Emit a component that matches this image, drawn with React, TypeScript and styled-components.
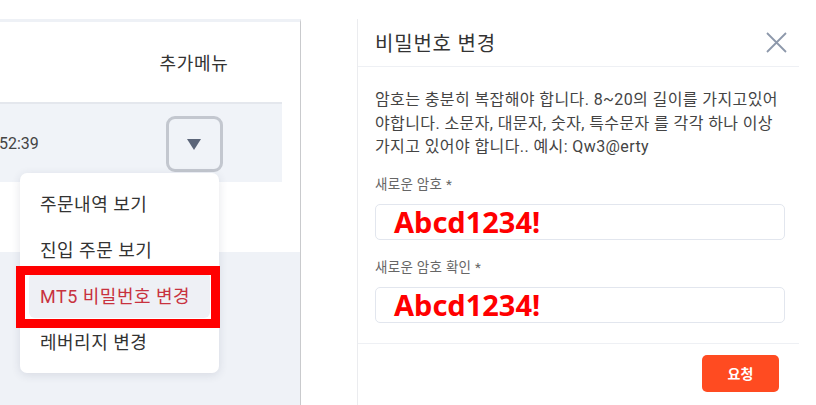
import React from 'react';
import styled, {createGlobalStyle} from 'styled-components';

const GlobalStyle = createGlobalStyle`
  html, body {
    margin: 0;
    padding: 0;
    background: #FFFFFF;
  }
  body {
    font-family: Roboto, "Noto Sans CJK KR", sans-serif;
  }
`;

const Page = styled.div`
  display: flex;
  align-items: stretch;
  width: 816px;
  height: 405px;
  padding-top: 19px;
  box-sizing: border-box;
  overflow: hidden;
`;

const LeftPanel = styled.div`
  position: relative;
  display: flex;
  flex-direction: column;
  width: 300px;
  flex-shrink: 0;
  border-top: 3px solid #eef1f6;
  border-right: 1px solid #c9cacd;
`;

const TableRow = styled.div<{$shaded?: boolean}>`
  display: grid;
  grid-template-columns: 1fr 88px 44px;
  align-items: center;
  width: 282px;
  height: ${p => (p.$shaded ? '78px' : '80px')};
  background: ${p => (p.$shaded ? '#f0f3f8' : 'transparent')};
  border-top: ${p => (p.$shaded ? '2px solid #e4e7ed' : 'none')};
  font-size: 18px;
  letter-spacing: 0.7px;
  color: #333;
`;

const HeadCell = styled.div`
  grid-column: 2;
  text-align: center;
  white-space: nowrap;
`;

const TimeCell = styled.div`
  grid-column: 1;
  font-size: 16px;
  letter-spacing: 0;
  color: #444;
  text-indent: -1px;
`;

const MoreButton = styled.button`
  grid-column: 2;
  justify-self: center;
  display: flex;
  align-items: center;
  justify-content: center;
  width: 57px;
  height: 56px;
  margin-top: 2px;
  padding: 0;
  border: 3px solid #c3c7cf;
  border-radius: 9px;
  background: transparent;
`;

const Triangle = styled.span`
  width: 0;
  height: 0;
  border-left: 7px solid transparent;
  border-right: 7px solid transparent;
  border-top: 11px solid #5b6579;
`;

const Spacer = styled.div`
  height: 70px;
`;

const GreyFill = styled.div`
  flex: 1;
  background: #eff2f7;
`;

const Menu = styled.ul`
  position: absolute;
  left: 20px;
  top: 151px;
  width: 199px;
  margin: 0;
  padding: 7px 0 9px;
  list-style: none;
  background: #FFFFFF;
  border-radius: 7px;
  box-shadow: 0 2px 10px rgba(40, 50, 80, 0.12);
`;

const MenuItem = styled.li<{$active?: boolean}>`
  position: relative;
  display: flex;
  align-items: center;
  height: 46px;
  margin: 0 9px;
  padding-left: 11px;
  border-radius: 6px;
  font-size: 18px;
  letter-spacing: 0.5px;
  white-space: nowrap;
  color: ${p => (p.$active ? '#c8323e' : '#333')};
  background: ${p => (p.$active ? '#eef0f5' : 'transparent')};
`;

const Highlight = styled.span`
  position: absolute;
  left: -13px;
  top: -6px;
  right: -10px;
  bottom: -10px;
  border: 9px solid #ff0000;
`;

const Modal = styled.div`
  display: flex;
  flex-direction: column;
  width: 441px;
  margin-left: 56px;
  flex-shrink: 0;
  border-left: 1px solid #ebecef;
`;

const ModalHeader = styled.div`
  display: flex;
  align-items: center;
  justify-content: space-between;
  height: 47px;
  padding: 0 12px 0 17px;
  border-bottom: 1px solid #eef0f4;
`;

const Title = styled.h2`
  margin: 0;
  font-size: 20px;
  letter-spacing: 0.8px;
  font-weight: 400;
  color: #333;
`;

const CloseButton = styled.button`
  display: flex;
  padding: 0;
  border: none;
  background: transparent;
`;

const ModalBody = styled.div`
  padding: 21px 14px 0 17px;
`;

const Description = styled.p`
  margin: 0;
  font-size: 16px;
  letter-spacing: 0.4px;
  line-height: 23.5px;
  color: #444;
  white-space: nowrap;
`;

const Label = styled.div<{$first?: boolean}>`
  margin-top: ${p => (p.$first ? '16px' : '18px')};
  font-size: 13.5px;
  letter-spacing: 0.3px;
  line-height: 19px;
  color: #666;
`;

const Input = styled.div`
  display: flex;
  align-items: center;
  height: 34px;
  margin-top: 10px;
  padding-left: 18px;
  border: 1px solid #e2e6ee;
  border-radius: 5px;
  font-family: "Noto Sans", sans-serif;
  font-size: 29px;
  font-weight: 700;
  color: #ff0000;
`;

const Footer = styled.div`
  display: flex;
  justify-content: flex-end;
  margin-top: 20px;
  padding: 11px 20px 0 0;
  border-top: 1px solid #eef0f4;
`;

const SubmitButton = styled.button`
  width: 77px;
  height: 37px;
  border: none;
  border-radius: 5px;
  background: #ff4b21;
  color: #FFFFFF;
  font-family: "Noto Sans CJK KR", sans-serif;
  font-size: 14px;
  font-weight: 700;
`;

const CloseIcon = () => (
  <svg width="21" height="21" viewBox="0 0 21 21">
    <path d="M1 1 L20 20 M20 1 L1 20" stroke="#8d98ab" strokeWidth="1.8" fill="none"/>
  </svg>
);

const menuItems = ['주문내역 보기', '진입 주문 보기', 'MT5 비밀번호 변경', '레버리지 변경'];

const App = (): JSX.Element => (
  <>
    <GlobalStyle/>
    <Page>
      <LeftPanel>
        <TableRow>
          <HeadCell>추가메뉴</HeadCell>
        </TableRow>
        <TableRow $shaded>
          <TimeCell>52:39</TimeCell>
          <MoreButton><Triangle/></MoreButton>
        </TableRow>
        <Spacer/>
        <GreyFill/>
        <Menu>
          {menuItems.map((item, i) => (
            <MenuItem key={item} $active={i === 2}>
              {item}
              {i === 2 && <Highlight/>}
            </MenuItem>
          ))}
        </Menu>
      </LeftPanel>
      <Modal>
        <ModalHeader>
          <Title>비밀번호 변경</Title>
          <CloseButton><CloseIcon/></CloseButton>
        </ModalHeader>
        <ModalBody>
          <Description>
            암호는 충분히 복잡해야 합니다. 8~20의 길이를 가지고있어<br/>
            야합니다. 소문자, 대문자, 숫자, 특수문자 를 각각 하나 이상<br/>
            가지고 있어야 합니다.. 예시: Qw3@erty
          </Description>
          <Label $first>새로운 암호 *</Label>
          <Input>Abcd1234!</Input>
          <Label>새로운 암호 확인 *</Label>
          <Input>Abcd1234!</Input>
        </ModalBody>
        <Footer>
          <SubmitButton>요청</SubmitButton>
        </Footer>
      </Modal>
    </Page>
  </>
);

export default App;
